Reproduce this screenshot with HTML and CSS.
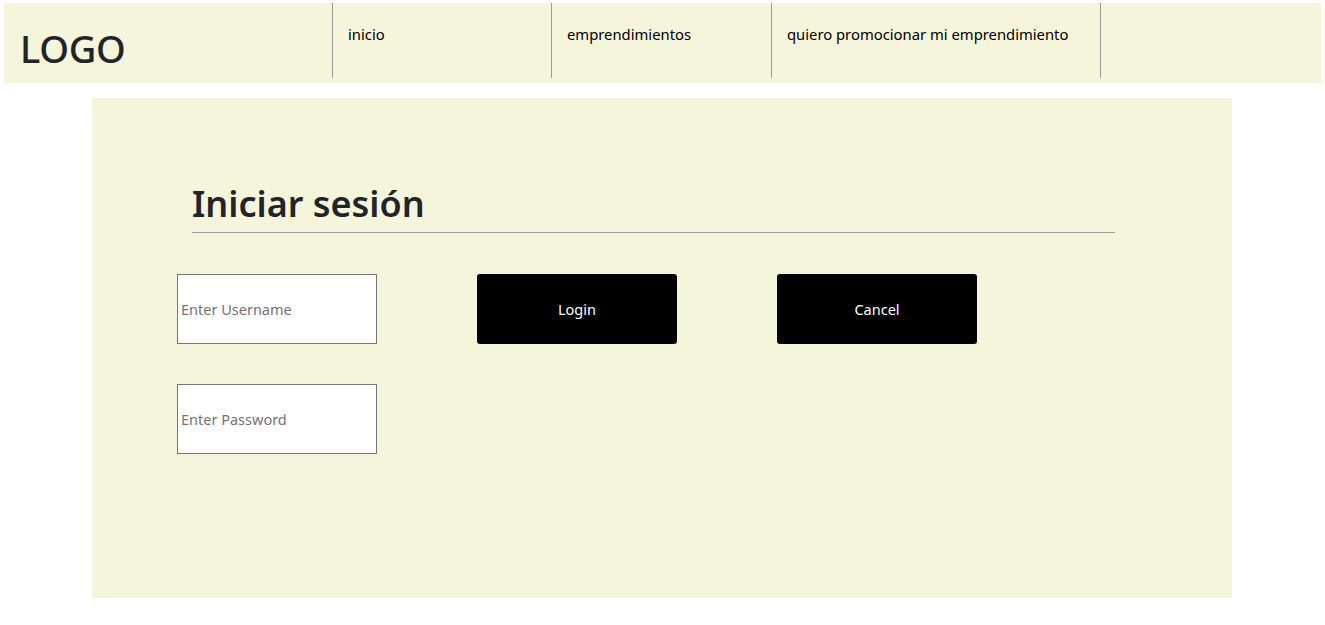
FILE: index.html
```html
<!DOCTYPE html>
<html lang="es">
<head>
<meta charset="utf-8">
<title>Iniciar sesión</title>
<link rel="stylesheet" href="styles.css">
</head>
<body>
<header class="site-header">
  <div class="brand"><h1 class="logo">LOGO</h1></div>
  <nav class="nav">
    <a class="nav-item nav-w1" href="#">inicio</a>
    <a class="nav-item nav-w1b" href="#">emprendimientos</a>
    <a class="nav-item nav-w2" href="#">quiero promocionar mi emprendimiento</a>
    <span class="nav-item nav-end"></span>
  </nav>
</header>
<main class="panel">
  <h1 class="title">Iniciar sesión</h1>
  <hr class="rule">
  <form class="login-grid">
    <input class="field" type="text" placeholder="Enter Username">
    <button class="btn" type="submit">Login</button>
    <button class="btn" type="button">Cancel</button>
    <input class="field" type="password" placeholder="Enter Password">
  </form>
</main>
</body>
</html>
```
FILE: styles.css
```css
html, body {
  margin: 0;
  padding: 0;
  background: #ffffff;
}
body {
  font-family: "Noto Sans", "Open Sans", "DejaVu Sans", sans-serif;
  color: #212529;
}
.site-header {
  margin: 3px 4px 0 4px;
  height: 80px;
  background: #f5f5dc;
  display: flex;
  align-items: flex-start;
}
.brand {
  width: 328px;
  height: 80px;
  box-sizing: border-box;
  padding: 21px 0 0 16px;
}
.logo {
  margin: 0;
  font-size: 38px;
  font-weight: 500;
  line-height: 48px;
  color: #212529;
  letter-spacing: -0.3px;
}
.nav {
  display: flex;
  height: 75px;
}
.nav-item {
  box-sizing: border-box;
  height: 75px;
  border-left: 1px solid #9a9a9a;
  padding: 21px 0 0 15px;
  font-size: 14.8px;
  line-height: 20px;
  color: #000;
  text-decoration: none;
}
.nav-w1 { width: 219px; }
.nav-w1b { width: 220px; }
.nav-w2 { width: 329px; }
.nav-end { width: 1px; padding: 0; }
.panel {
  display: block;
  width: 1140px;
  height: 500px;
  margin: 15px 0 0 92px;
  background: #f5f5dc;
  box-sizing: border-box;
  padding: 84px 117px 0 100px;
}
.title {
  margin: 0;
  font-size: 36px;
  font-weight: 600;
  line-height: 44px;
  color: #212529;
}
.rule {
  margin: 6px 0 0 0;
  border: 0;
  border-top: 1px solid #9c9c9c;
  height: 0;
}
.login-grid {
  margin: 41px 0 0 -15px;
  display: grid;
  grid-template-columns: 200px 200px 200px;
  grid-auto-rows: 70px;
  column-gap: 100px;
  row-gap: 40px;
}
.field {
  box-sizing: border-box;
  width: 200px;
  height: 70px;
  margin: 0;
  border: 1px solid #767676;
  background: #fff;
  padding: 1px 3px;
  font-family: "Noto Sans", "Open Sans", sans-serif;
  font-size: 14.5px;
  color: #333;
}
.field::placeholder {
  color: #757575;
}
.btn {
  box-sizing: border-box;
  width: 200px;
  height: 70px;
  margin: 0;
  border: 0;
  border-radius: 3px;
  background: #000;
  color: #fff;
  font-family: "Noto Sans", "Open Sans", sans-serif;
  font-size: 14.5px;
}
```
